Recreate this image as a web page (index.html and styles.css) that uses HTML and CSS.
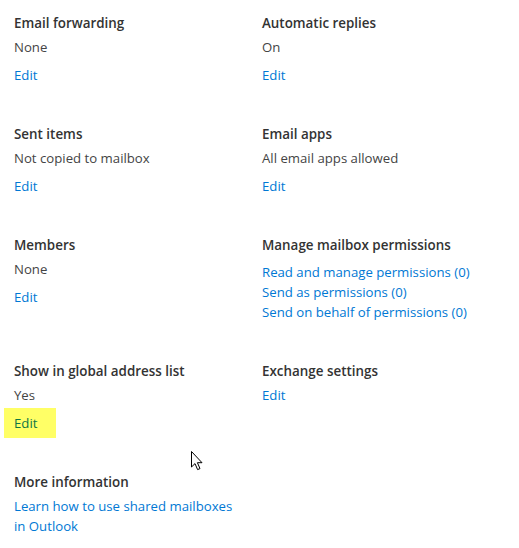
FILE: index.html
```html
<!DOCTYPE html>
<html>
<head>
<meta charset="utf-8">
<link rel="stylesheet" href="styles.css">
</head>
<body>
<div class="page">
  <div class="grid">
    <section class="item">
      <h3 class="label">Email forwarding</h3>
      <div class="value">None</div>
      <a class="edit">Edit</a>
    </section>
    <section class="item">
      <h3 class="label">Automatic replies</h3>
      <div class="value">On</div>
      <a class="edit">Edit</a>
    </section>
    <section class="item">
      <h3 class="label">Sent items</h3>
      <div class="value">Not copied to mailbox</div>
      <a class="edit">Edit</a>
    </section>
    <section class="item">
      <h3 class="label">Email apps</h3>
      <div class="value">All email apps allowed</div>
      <a class="edit">Edit</a>
    </section>
    <section class="item">
      <h3 class="label">Members</h3>
      <div class="value">None</div>
      <a class="edit">Edit</a>
    </section>
    <section class="item">
      <h3 class="label">Manage mailbox permissions</h3>
      <div class="links">
        <a class="link">Read and manage permissions (0)</a>
        <a class="link">Send as permissions (0)</a>
        <a class="link">Send on behalf of permissions (0)</a>
      </div>
    </section>
    <section class="item">
      <h3 class="label">Show in global address list</h3>
      <div class="value">Yes</div>
      <a class="edit"><span class="highlight">Edit</span></a>
    </section>
    <section class="item">
      <h3 class="label">Exchange settings</h3>
      <a class="link">Edit</a>
    </section>
    <section class="item">
      <h3 class="label">More information</h3>
      <a class="link">Learn how to use shared mailboxes in Outlook</a>
    </section>
  </div>
  <svg class="cursor" width="14" height="22" viewBox="0 0 14 22">
    <path d="M1.5 1.5 L1.5 17 L5 13.6 L7.6 19.6 L10 18.6 L7.4 12.7 L12 12.7 Z" fill="#fff" stroke="#000" stroke-width="1" stroke-linejoin="miter"/>
  </svg>
</div>
</body>
</html>
```

FILE: styles.css
```css
html, body {
  margin: 0;
  padding: 0;
  background: #ffffff;
}

.page {
  position: relative;
  width: 519px;
  height: 548px;
  font-family: "Open Sans", "Noto Sans", sans-serif;
  font-size: 13.2px;
  color: #333333;
}

.grid {
  display: grid;
  grid-template-columns: 248px 240px;
  row-gap: 39px;
  padding: 13px 0 0 14px;
}

.item {
  display: flex;
  flex-direction: column;
  align-items: flex-start;
  padding-right: 20px;
}

.label {
  margin: 0 0 4px 0;
  font-size: 13.4px;
  font-weight: 600;
  line-height: 20px;
  color: #333333;
}

.value {
  line-height: 20px;
  color: #444444;
}

.edit {
  margin-top: 8px;
  line-height: 20px;
  color: #0078d4;
}

.links {
  display: flex;
  flex-direction: column;
  margin-top: 3px;
}

.link {
  line-height: 20px;
  color: #0078d4;
}

.highlight {
  display: inline-block;
  background: #ffff66;
  color: #0e7646;
  margin: -5px -19px -5px -10px;
  padding: 5px 19px 5px 10px;
}

.cursor {
  position: absolute;
  left: 190px;
  top: 450px;
}
```
